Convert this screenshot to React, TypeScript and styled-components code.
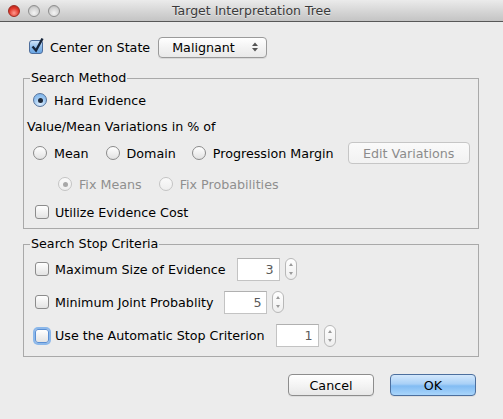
import React from "react";
import styled, { createGlobalStyle, css } from "styled-components";

const GlobalStyle = createGlobalStyle`
    html, body {
        margin: 0;
        padding: 0;
        background: #ececec;
    }
    body {
        font-family: "DejaVu Sans", "Liberation Sans", sans-serif;
        font-size: 12.7px;
        color: #000;
    }
`;

const Window = styled.div`
    width: 503px;
    height: 419px;
    display: flex;
    flex-direction: column;
    background: #ececec;
    overflow: hidden;
`;

const TitleBar = styled.div`
    height: 21px;
    flex: none;
    display: grid;
    grid-template-columns: 80px 1fr 80px;
    align-items: center;
    background: linear-gradient(#ebebeb, #d3d3d3 60%, #c4c4c4);
    border-bottom: 1px solid #585858;
`;

const Lights = styled.div`
    display: flex;
    gap: 8px;
    padding-left: 8px;
`;

const Light = styled.span<{ $red?: boolean }>`
    width: 12px;
    height: 12px;
    border-radius: 50%;
    box-sizing: border-box;
    ${(p) =>
        p.$red
            ? css`
                  background: radial-gradient(circle at 50% 70%, #ff9a8f, #e1392c 55%, #a81d12);
                  border: 1px solid #9c2a20;
              `
            : css`
                  background: radial-gradient(circle at 50% 70%, #f4f4f4, #d2d2d2 60%, #a9a9a9);
                  border: 1px solid #8e8e8e;
              `}
`;

const Title = styled.div`
    text-align: center;
    font-size: 12.5px;
    color: #3a3a3a;
    text-shadow: 0 1px 0 rgba(255, 255, 255, 0.5);
`;

const Body = styled.div`
    padding: 14px 24px 0 23px;
    display: flex;
    flex-direction: column;
`;

const TopRow = styled.div`
    height: 22px;
    display: flex;
    align-items: center;
    padding-left: 6px;
`;

const Label = styled.span<{ $disabled?: boolean }>`
    white-space: nowrap;
    color: ${(p) => (p.$disabled ? "#8f8f8f" : "#000")};
`;

const Option = styled.label<{ $gap?: number; $after?: number }>`
    display: flex;
    align-items: center;
    gap: ${(p) => p.$gap ?? 7}px;
    margin-right: ${(p) => p.$after ?? 0}px;
`;

const Box = styled.span<{ $checked?: boolean; $focus?: boolean }>`
    position: relative;
    width: 14px;
    height: 14px;
    box-sizing: border-box;
    border-radius: 3px;
    border: 1px solid #8c8c8c;
    background: linear-gradient(#ffffff, #f1f1f1 50%, #e3e3e3);
    flex: none;
    ${(p) =>
        p.$checked &&
        css`
            border-color: #4e6e9c;
            background: linear-gradient(#cfe3f8, #8fbcea 50%, #6aa6e5);
        `}
    ${(p) =>
        p.$focus &&
        css`
            border-color: #5a8fd4;
            box-shadow: 0 0 0 2px #8cb8ea;
        `}
`;

const CheckMark = styled.svg`
    position: absolute;
    left: 0;
    top: -4px;
`;

const Radio = styled.span<{ $checked?: boolean; $disabled?: boolean }>`
    width: 14px;
    height: 14px;
    box-sizing: border-box;
    border-radius: 50%;
    flex: none;
    display: flex;
    align-items: center;
    justify-content: center;
    border: 1px solid ${(p) => (p.$disabled ? "#c4c4c4" : "#8a8a8a")};
    background: ${(p) =>
        p.$disabled ? "linear-gradient(#fafafa, #eeeeee)" : "linear-gradient(#ffffff, #f0f0f0 50%, #e2e2e2)"};
    ${(p) =>
        p.$checked &&
        !p.$disabled &&
        css`
            border-color: #56739c;
            background: radial-gradient(circle at 50% 80%, #dcecfc, #95c2ee 60%, #74aee8);
        `}
    &::after {
        content: "";
        display: ${(p) => (p.$checked ? "block" : "none")};
        width: 5px;
        height: 5px;
        border-radius: 50%;
        background: ${(p) => (p.$disabled ? "#a8a8a8" : "#1f2a3a")};
    }
`;

const Select = styled.div`
    margin-left: 8px;
    width: 109px;
    height: 21px;
    box-sizing: border-box;
    border: 1px solid #9a9a9a;
    border-radius: 4px;
    background: linear-gradient(#ffffff, #f3f3f3 50%, #e9e9e9);
    box-shadow: 0 1px 0 rgba(0, 0, 0, 0.08);
    display: flex;
    align-items: center;
    justify-content: space-between;
    padding: 0 8px 0 13px;
`;

const Group = styled.fieldset<{ $top: number; $bottom: number }>`
    margin: ${(p) => p.$top}px 0 0 0;
    padding: 0 0 ${(p) => p.$bottom}px 0;
    border: 1px solid #a9a9a9;
    border-radius: 0;
    min-width: 0;
`;

const Legend = styled.legend`
    margin-left: 6px;
    padding: 0 1px;
    line-height: 16px;
    height: 16px;
`;

const Row = styled.div<{ $h: number; $indent: number }>`
    height: ${(p) => p.$h}px;
    display: flex;
    align-items: center;
    padding-left: ${(p) => p.$indent}px;
`;

const PushButton = styled.div<{ $w: number; $primary?: boolean; $disabled?: boolean }>`
    width: ${(p) => p.$w}px;
    height: 22px;
    box-sizing: border-box;
    border-radius: 4px;
    display: flex;
    align-items: center;
    justify-content: center;
    flex: none;
    border: 1px solid #8d8d8d;
    background: linear-gradient(#ffffff, #f4f4f4 50%, #e8e8e8);
    box-shadow: 0 1px 0 rgba(0, 0, 0, 0.06);
    ${(p) =>
        p.$disabled &&
        css`
            border-color: #c6c6c6;
            color: #8c8c8c;
            background: linear-gradient(#fafafa, #f2f2f2);
            box-shadow: none;
        `}
    ${(p) =>
        p.$primary &&
        css`
            border-color: #4c6f9e;
            background: linear-gradient(#d4e8fc, #a8d0f7 45%, #82bcf3 55%, #a9d5fb);
        `}
`;

const NumberField = styled.div`
    margin-left: 11px;
    width: 43px;
    height: 23px;
    box-sizing: border-box;
    border: 1px solid #c3c3c3;
    border-top-color: #b0b0b0;
    background: #fff;
    display: flex;
    align-items: center;
    justify-content: flex-end;
    padding-right: 5px;
    color: #5a5a5a;
`;

const Spinner = styled.div`
    margin-left: 5px;
    width: 12px;
    height: 22px;
    box-sizing: border-box;
    border: 1px solid #b8b8b8;
    border-radius: 6px;
    background: linear-gradient(#ffffff, #eeeeee);
    display: flex;
    flex-direction: column;
    align-items: center;
    justify-content: space-between;
    padding: 4px 0;
`;

const Arrow = styled.span<{ $down?: boolean }>`
    width: 0;
    height: 0;
    border-left: 2.5px solid transparent;
    border-right: 2.5px solid transparent;
    ${(p) => (p.$down ? "border-top: 3px solid #9a9a9a;" : "border-bottom: 3px solid #9a9a9a;")}
`;

const Buttons = styled.div`
    margin-top: 17px;
    display: flex;
    justify-content: flex-end;
    gap: 16px;
    padding-right: 3px;
`;

const Check = ({ checked, focus }: { checked?: boolean; focus?: boolean }) => (
    <Box $checked={checked} $focus={focus}>
        {checked && (
            <CheckMark width="15" height="16" viewBox="0 0 15 16">
                <path d="M2.5 9.5 L6 13.5 L12.5 1.5" fill="none" stroke="#15243a" strokeWidth="2.4" />
            </CheckMark>
        )}
    </Box>
);

const SpinBox = ({ value }: { value: number }) => (
    <>
        <NumberField>{value}</NumberField>
        <Spinner>
            <Arrow />
            <Arrow $down />
        </Spinner>
    </>
);

export default function App() {
    return (
        <Window>
            <GlobalStyle />
            <TitleBar>
                <Lights>
                    <Light $red />
                    <Light />
                    <Light />
                </Lights>
                <Title>Target Interpretation Tree</Title>
                <span />
            </TitleBar>
            <Body>
                <TopRow>
                    <Option>
                        <Check checked />
                        <Label>Center on State</Label>
                    </Option>
                    <Select>
                        <span>Malignant</span>
                        <svg width="6" height="10" viewBox="0 0 6 10">
                            <path d="M0 4 L3 0.5 L6 4 Z M0 6 L3 9.5 L6 6 Z" fill="#555" />
                        </svg>
                    </Select>
                </TopRow>

                <Group $top={12} $bottom={4}>
                    <Legend>Search Method</Legend>
                    <Row $h={28} $indent={9}>
                        <Option>
                            <Radio $checked />
                            <Label>Hard Evidence</Label>
                        </Option>
                    </Row>
                    <Row $h={24} $indent={3}>
                        <Label>Value/Mean Variations in % of</Label>
                    </Row>
                    <Row $h={30} $indent={9}>
                        <Option $after={17}>
                            <Radio />
                            <Label>Mean</Label>
                        </Option>
                        <Option $after={16}>
                            <Radio />
                            <Label>Domain</Label>
                        </Option>
                        <Option $after={14}>
                            <Radio />
                            <Label>Progression Margin</Label>
                        </Option>
                        <PushButton $w={122} $disabled>
                            Edit Variations
                        </PushButton>
                    </Row>
                    <Row $h={32} $indent={34}>
                        <Option $after={17}>
                            <Radio $checked $disabled />
                            <Label $disabled>Fix Means</Label>
                        </Option>
                        <Option>
                            <Radio $disabled />
                            <Label $disabled>Fix Probabilities</Label>
                        </Option>
                    </Row>
                    <Row $h={24} $indent={11}>
                        <Option $gap={6}>
                            <Check />
                            <Label>Utilize Evidence Cost</Label>
                        </Option>
                    </Row>
                </Group>

                <Group $top={7} $bottom={3}>
                    <Legend>Search Stop Criteria</Legend>
                    <Row $h={34} $indent={11}>
                        <Option $gap={6}>
                            <Check />
                            <Label>Maximum Size of Evidence</Label>
                        </Option>
                        <SpinBox value={3} />
                    </Row>
                    <Row $h={32} $indent={11}>
                        <Option $gap={6}>
                            <Check />
                            <Label>Minimum Joint Probablity</Label>
                        </Option>
                        <SpinBox value={5} />
                    </Row>
                    <Row $h={35} $indent={11}>
                        <Option $gap={6}>
                            <Check focus />
                            <Label>Use the Automatic Stop Criterion</Label>
                        </Option>
                        <SpinBox value={1} />
                    </Row>
                </Group>

                <Buttons>
                    <PushButton $w={86}>Cancel</PushButton>
                    <PushButton $w={86} $primary>
                        OK
                    </PushButton>
                </Buttons>
            </Body>
        </Window>
    );
}
